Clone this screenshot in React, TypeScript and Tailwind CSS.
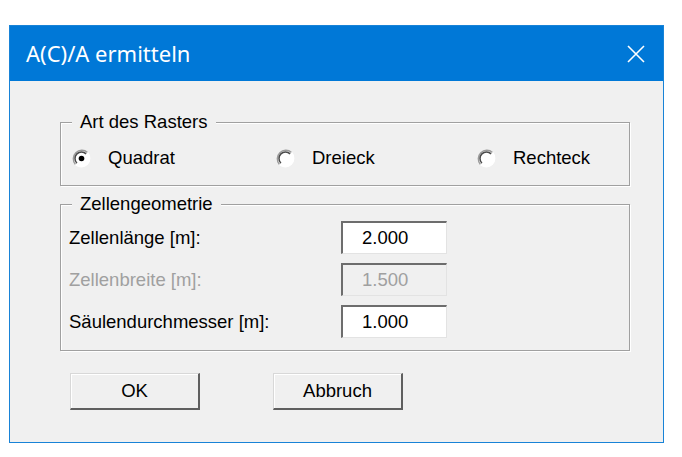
import React from 'react'

const body = { fontFamily: '"Liberation Sans", Arial, sans-serif' }

function Radio({ checked }: { checked?: boolean }) {
  return (
    <svg width="19" height="19" viewBox="0 0 19 19" className="shrink-0">
      <circle cx="9.5" cy="9.5" r="8.5" fill="#ffffff" />
      <path d="M3.5 15.5 A8.5 8.5 0 0 1 15.5 3.5" fill="none" stroke="#9a9a9a" strokeWidth="1.5" />
      <path d="M4.9 14.1 A6.5 6.5 0 0 1 14.1 4.9" fill="none" stroke="#4a4a4a" strokeWidth="1.5" />
      <path d="M15.5 3.5 A8.5 8.5 0 0 1 3.5 15.5" fill="none" stroke="#ffffff" strokeWidth="1.5" />
      {checked && <circle cx="9.5" cy="9.5" r="2.8" fill="#000000" />}
    </svg>
  )
}

function Field({ label, value, disabled }: { label: string; value: string; disabled?: boolean }) {
  return (
    <div className="flex items-center h-[33px]">
      <span className={`w-[272px] ${disabled ? 'text-[#a0a0a0]' : 'text-black'}`}>{label}</span>
      <div
        className={`w-[106px] h-[33px] flex items-center pl-[19px] border-t-2 border-l-2 border-b border-r border-t-[#6d6d6d] border-l-[#6d6d6d] border-b-[#e3e3e3] border-r-[#e3e3e3] ${disabled ? 'bg-[#f0f0f0] text-[#a0a0a0]' : 'bg-white text-black'}`}
      >
        {value}
      </div>
    </div>
  )
}

function Button({ label }: { label: string }) {
  return (
    <button className="w-[130px] h-[37px] bg-[#f0f0f0] text-black border-t border-l border-b-2 border-r-2 border-t-[#d8d8d8] border-l-[#d8d8d8] border-b-[#5f5f5f] border-r-[#5f5f5f] shadow-[inset_1px_1px_0_#ffffff] flex items-center justify-center">
      {label}
    </button>
  )
}

export default function App() {
  return (
    <div className="w-[682px] h-[457px] bg-white pt-[25px] pl-[9px]">
      <div className="w-[655px] h-[418px] border border-[#1883d7] flex flex-col">
        <div className="h-[55px] bg-[#0078d7] flex items-center justify-between pl-[16px] pr-[18px]">
          <span className="text-white text-[22px]" style={{ fontFamily: '"Noto Sans", "Open Sans", sans-serif' }}>
            A(C)/A ermitteln
          </span>
          <svg width="18" height="18" viewBox="0 0 18 18">
            <path d="M1 1 L17 17 M17 1 L1 17" stroke="#ffffff" strokeWidth="1.6" />
          </svg>
        </div>
        <div className="flex-1 bg-[#f0f0f0] pt-[30px] pl-[50px] text-[18.5px] leading-[22px]" style={body}>
          <fieldset className="w-[570px] border border-[#a0a0a0] shadow-[1px_1px_0_#ffffff,inset_1px_1px_0_#ffffff] pt-[14px] pb-[16px] pl-[11px]">
            <legend className="px-[8px] bg-[#f0f0f0] leading-[22px]">Art des Rasters</legend>
            <div className="flex items-center h-[22px]">
              <div className="w-[204px] flex items-center gap-[17px]">
                <Radio checked />
                <span>Quadrat</span>
              </div>
              <div className="w-[201px] flex items-center gap-[17px]">
                <Radio />
                <span>Dreieck</span>
              </div>
              <div className="flex items-center gap-[17px]">
                <Radio />
                <span>Rechteck</span>
              </div>
            </div>
          </fieldset>
          <fieldset className="w-[570px] mt-[7px] border border-[#a0a0a0] shadow-[1px_1px_0_#ffffff,inset_1px_1px_0_#ffffff] pt-[6px] pb-[12px] pl-[8px]">
            <legend className="ml-[3px] px-[8px] bg-[#f0f0f0] leading-[22px]">Zellengeometrie</legend>
            <div className="flex flex-col gap-[9px]">
              <Field label="Zellenlänge [m]:" value="2.000" />
              <Field label="Zellenbreite [m]:" value="1.500" disabled />
              <Field label="Säulendurchmesser [m]:" value="1.000" />
            </div>
          </fieldset>
          <div className="flex gap-[73px] mt-[22px] ml-[10px]">
            <Button label="OK" />
            <Button label="Abbruch" />
          </div>
        </div>
      </div>
    </div>
  )
}
